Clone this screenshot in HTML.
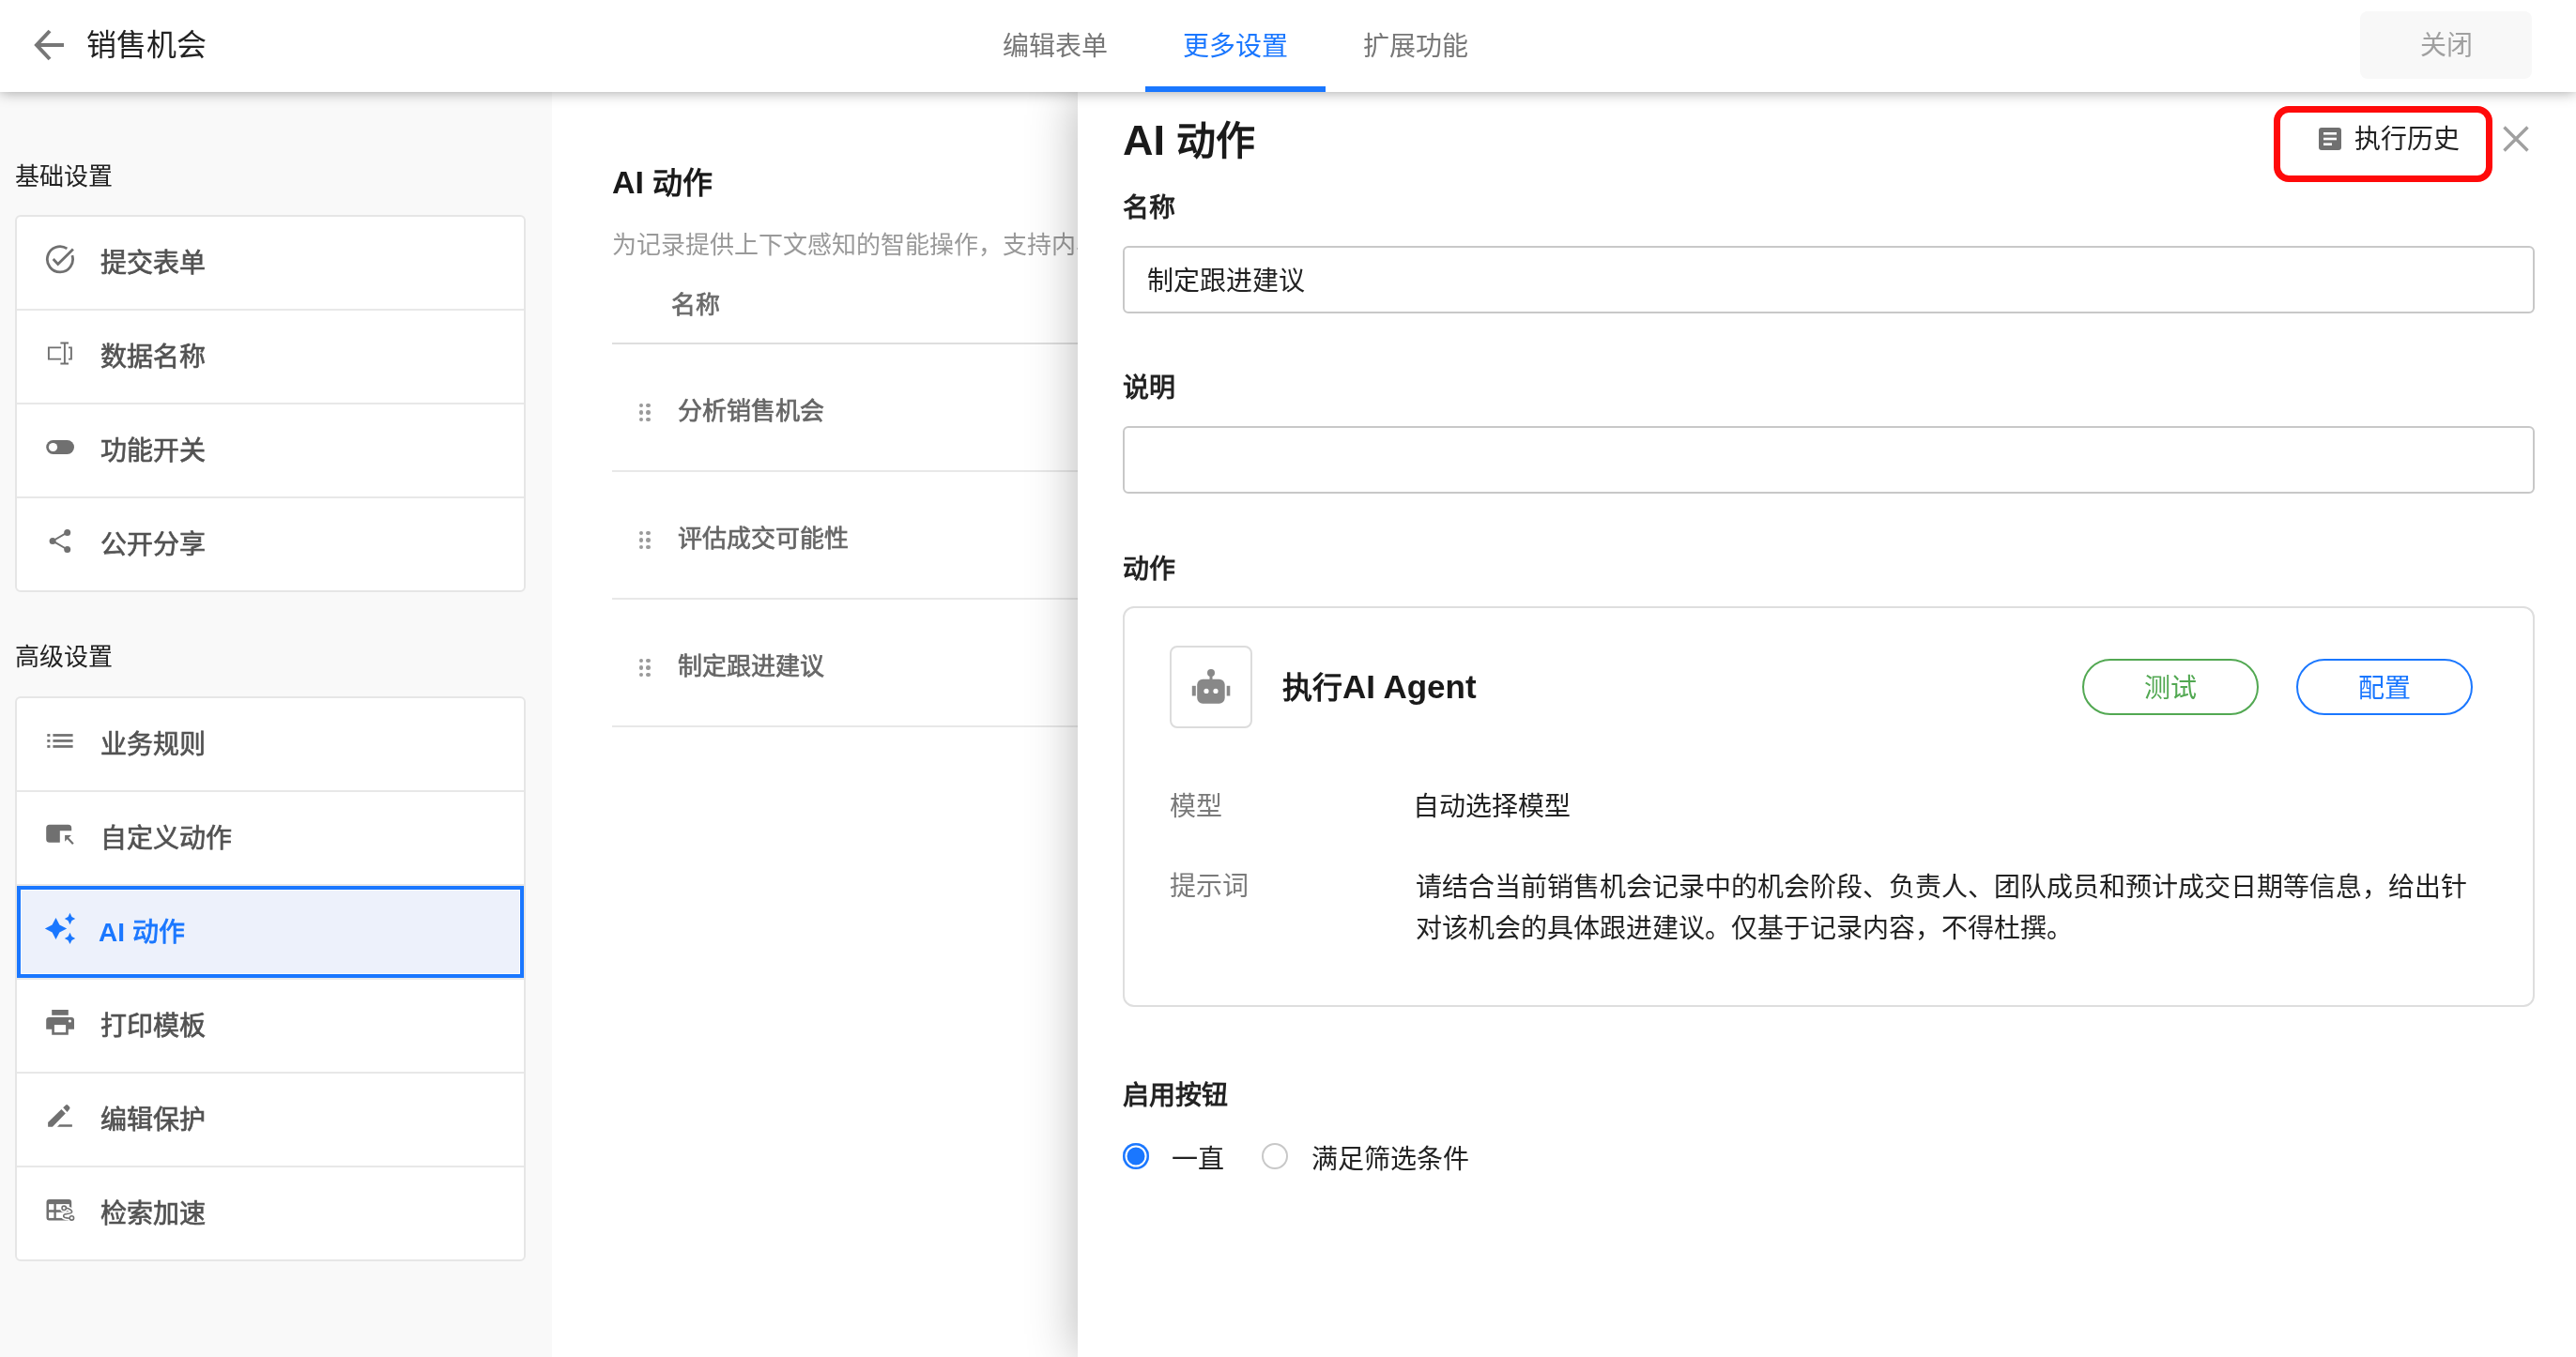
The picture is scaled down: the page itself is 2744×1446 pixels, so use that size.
<!DOCTYPE html>
<html lang="zh-CN">
<head>
<meta charset="utf-8">
<style>
*{box-sizing:border-box;margin:0;padding:0}
html,body{width:2744px;height:1446px;overflow:hidden;background:#fff;font-family:"Liberation Sans",sans-serif;}
body{will-change:transform}
.a{position:absolute;white-space:nowrap}
.t{position:absolute;white-space:nowrap;line-height:1}
#header{position:absolute;left:0;top:0;width:2744px;height:98px;background:#fff;z-index:10;box-shadow:0 0 14px rgba(0,0,0,0.38)}
#side{position:absolute;left:0;top:98px;width:588px;height:1348px;background:#f9f9f9}
.card{position:absolute;left:16px;width:544px;background:#fff;border:2px solid #e6e6e6;border-radius:6px}
.row{position:relative;height:100px;border-bottom:2px solid #e8e8e8}
.row:last-child{height:98px;border-bottom:none}
.row .lbl{position:absolute;left:89px;top:36px;font-size:28px;line-height:28px;color:#525252;-webkit-text-stroke:0.7px #525252}
.row svg{position:absolute;left:30px;top:30px}
#main{position:absolute;left:588px;top:98px;width:560px;height:1348px;background:#fff}
#drawer{position:absolute;left:1148px;top:98px;width:1596px;height:1348px;background:#fff;z-index:5;box-shadow:0 0 50px rgba(0,0,0,0.29)}
.lab{position:absolute;left:48px;font-size:28px;line-height:28px;color:#222;font-weight:700}
.inp{position:absolute;left:48px;width:1504px;height:72px;border:2px solid #c8c8c8;border-radius:6px;background:#fff}
</style>
</head>
<body>
<div id="header">
  <svg class="a" style="left:34px;top:29px" width="38" height="38" viewBox="0 0 38 38"><path d="M19 4 L5 19 L19 34 M5 19 H34" fill="none" stroke="#777" stroke-width="4"/></svg>
  <div class="t" style="left:92px;top:32px;font-size:32px;color:#222">销售机会</div>
  <div class="t" style="left:1068px;top:36px;font-size:28px;color:#777">编辑表单</div>
  <div class="t" style="left:1260px;top:36px;font-size:28px;color:#1a77ff">更多设置</div>
  <div class="t" style="left:1452px;top:36px;font-size:28px;color:#777">扩展功能</div>
  <div class="a" style="left:1220px;top:92px;width:192px;height:6px;background:#1a77ff"></div>
  <div class="a" style="left:2514px;top:12px;width:183px;height:72px;background:#f8f8f8;border-radius:8px"></div>
  <div class="t" style="left:2578px;top:35px;font-size:28px;color:#a0a0a0">关闭</div>
</div>

<div id="side">
  <div class="t" style="left:16px;top:77px;font-size:26px;color:#222">基础设置</div>
  <div class="card" style="top:131px">
    <div class="row"><svg width="32" height="32" viewBox="0 0 32 32"><path d="M28.9 11.1 A13.6 13.6 0 1 1 23.4 3.9" fill="none" stroke="#707070" stroke-width="2.8"/><path d="M8.7 15 L13.7 20.4 L29.9 4.4" fill="none" stroke="#707070" stroke-width="2.8"/></svg><div class="lbl">提交表单</div></div>
    <div class="row"><svg width="32" height="32" viewBox="0 0 32 32"><path d="M17.1 9.4 H3.9 V21.6 H17.1 M25 9.4 H27.9 V21.6 H25 M20.9 4.5 V26.5 M16.4 4.5 H25 M16.4 26.5 H25" fill="none" stroke="#707070" stroke-width="1.9"/></svg><div class="lbl">数据名称</div></div>
    <div class="row"><svg width="32" height="32" viewBox="0 0 32 32"><rect x="1.2" y="8.1" width="29.8" height="14.8" rx="7.4" fill="#707070"/><circle cx="8.5" cy="15.5" r="4.6" fill="#fff"/></svg><div class="lbl">功能开关</div></div>
    <div class="row"><svg width="32" height="32" viewBox="0 0 32 32"><path d="M23.7 6.4 L8.1 15.4 L23.7 24.5" fill="none" stroke="#707070" stroke-width="1.9"/><circle cx="23.7" cy="6.4" r="3.5" fill="#707070"/><circle cx="8.1" cy="15.4" r="3.5" fill="#707070"/><circle cx="23.7" cy="24.5" r="3.5" fill="#707070"/></svg><div class="lbl">公开分享</div></div>
  </div>
  <div class="t" style="left:16px;top:589px;font-size:26px;color:#222">高级设置</div>
  <div class="card" style="top:644px">
    <div class="row"><svg width="32" height="32" viewBox="0 0 32 32"><g fill="#707070"><rect x="2.3" y="8.1" width="3.1" height="2.7"/><rect x="2.3" y="14.1" width="3.1" height="2.7"/><rect x="2.3" y="20.1" width="3.1" height="2.7"/><rect x="8.4" y="8.1" width="21.2" height="2.7"/><rect x="8.4" y="14.1" width="21.2" height="2.7"/><rect x="8.4" y="20.1" width="21.2" height="2.7"/></g></svg><div class="lbl">业务规则</div></div>
    <div class="row"><svg width="32" height="32" viewBox="0 0 32 32"><path d="M4.7 4.7 H24.7 A3.5 3.5 0 0 1 28.2 8.2 V11.3 H15.8 V23.7 H4.7 A3.5 3.5 0 0 1 1.2 20.2 V8.2 A3.5 3.5 0 0 1 4.7 4.7 Z" fill="#707070"/><path d="M21.1 16.1 H27.9 L21.1 22.8 Z" fill="#707070"/><path d="M23.5 18.5 L29.9 25.3" stroke="#707070" stroke-width="2.2"/></svg><div class="lbl">自定义动作</div></div>
    <div class="row" style="background:#edf1fb"><div style="position:absolute;left:0;top:0;width:540px;height:98px;border:4px solid #1a77ff;box-shadow:inset 0 0 0 1px #fff"></div><svg width="32" height="32" viewBox="0 0 32 32" style="overflow:visible"><g fill="#1a77ff"><path d="M11.5 3.9 L15.4 11.6 L23.15 15.5 L15.4 19.4 L11.5 27.1 L7.6 19.4 L-0.15 15.5 L7.6 11.6 Z"/><path d="M26.5 -1.2 L28.5 3 L32.2 5 L28.5 7 L26.5 11.2 L24.5 7 L20.8 5 L24.5 3 Z"/><path d="M26.5 19.7 L28.5 23.9 L32.2 25.9 L28.5 27.9 L26.5 32.1 L24.5 27.9 L20.8 25.9 L24.5 23.9 Z"/></g></svg><div class="lbl" style="margin-left:-2px;color:#1a77ff;-webkit-text-stroke:0.8px #1a77ff"><span style="font-weight:700;-webkit-text-stroke:0 transparent">AI</span> 动作</div></div>
    <div class="row"><svg width="32" height="32" viewBox="0 0 32 32"><g fill="#707070"><rect x="7.2" y="2" width="17.6" height="5.8"/><path d="M4.2 9.9 H28 A3 3 0 0 1 31 12.9 V22.7 H24.8 V28.7 H7.2 V22.7 H1.2 V12.9 A3 3 0 0 1 4.2 9.9 Z"/></g><rect x="9.9" y="18.1" width="12.2" height="8" fill="#fff"/><circle cx="26.4" cy="14" r="1.6" fill="#fff"/></svg><div class="lbl">打印模板</div></div>
    <div class="row"><svg width="32" height="32" viewBox="0 0 32 32"><g fill="#707070"><path d="M3.1 26.8 V22.1 L17.4 7.9 L21.8 12.5 L7.9 26.8 Z"/><path d="M19.2 6.3 L22.1 3.4 Q23.2 2.6 24.2 3.6 L26.1 5.6 Q27 6.7 26.1 7.8 L23.6 10.9 Z"/><path d="M13 26.8 L15.4 24.3 H28.9 V26.8 Z"/></g></svg><div class="lbl">编辑保护</div></div>
    <div class="row"><svg width="32" height="32" viewBox="0 0 32 32"><path d="M4.5 4 H25.2 A3 3 0 0 1 28.2 7 V26.4 H4.5 A3 3 0 0 1 1.5 23.4 V7 A3 3 0 0 1 4.5 4 Z" fill="#707070"/><g fill="#fff"><rect x="4" y="9.1" width="5.4" height="6.1"/><rect x="11.8" y="9.1" width="14" height="6.1"/><rect x="4" y="17.8" width="5.4" height="6.1"/><rect x="11.8" y="17.8" width="14" height="6.1"/></g><path d="M22.8 13.3 C26 14.2 29 15.5 28.6 17.6 C28.2 19.2 24 19.3 21.5 19.8 C19.5 20.3 19 22.5 20.8 23.3 C22.5 24 24.5 24.2 26 24.3" fill="none" stroke="#fff" stroke-width="4.6"/><circle cx="20.2" cy="13.3" r="4.4" fill="#fff"/><circle cx="28.4" cy="23.9" r="4.4" fill="#fff"/><path d="M22.8 13.3 C26 14.2 29 15.5 28.6 17.6 C28.2 19.2 24 19.3 21.5 19.8 C19.5 20.3 19 22.5 20.8 23.3 C22.5 24 24.5 24.2 26 24.3" fill="none" stroke="#707070" stroke-width="1.6"/><circle cx="20.2" cy="13.3" r="2.2" fill="#fff" stroke="#707070" stroke-width="1.6"/><circle cx="28.4" cy="23.9" r="2.2" fill="#fff" stroke="#707070" stroke-width="1.6"/></svg><div class="lbl">检索加速</div></div>
  </div>
</div>

<div id="main">
  <div class="t" style="left:64px;top:79px;font-size:32px;color:#1a1a1a;font-weight:700"><span style="font-size:34px">AI</span> 动作</div>
  <div class="t" style="left:64px;top:149.5px;font-size:26px;color:#999">为记录提供上下文感知的智能操作，支持内容生成与分析</div>
  <div class="t" style="left:127px;top:213.5px;font-size:26px;color:#6a6a6a;-webkit-text-stroke:0.7px #6a6a6a">名称</div>
  <div class="a" style="left:64px;top:267px;width:600px;height:2px;background:#dedede"></div>
  <div class="a" style="left:64px;top:403px;width:600px;height:2px;background:#e8e8e8"></div>
  <div class="a" style="left:64px;top:539px;width:600px;height:2px;background:#e8e8e8"></div>
  <div class="a" style="left:64px;top:675px;width:600px;height:2px;background:#e8e8e8"></div>
  <div class="a" style="left:92.7px;top:331.7px;width:4.6px;height:4.6px;border-radius:50%;background:#9a9a9a"></div><div class="a" style="left:100.4px;top:331.7px;width:4.6px;height:4.6px;border-radius:50%;background:#9a9a9a"></div><div class="a" style="left:92.7px;top:339.2px;width:4.6px;height:4.6px;border-radius:50%;background:#9a9a9a"></div><div class="a" style="left:100.4px;top:339.2px;width:4.6px;height:4.6px;border-radius:50%;background:#9a9a9a"></div><div class="a" style="left:92.7px;top:346.9px;width:4.6px;height:4.6px;border-radius:50%;background:#9a9a9a"></div><div class="a" style="left:100.4px;top:346.9px;width:4.6px;height:4.6px;border-radius:50%;background:#9a9a9a"></div><div class="a" style="left:92.7px;top:467.7px;width:4.6px;height:4.6px;border-radius:50%;background:#9a9a9a"></div><div class="a" style="left:100.4px;top:467.7px;width:4.6px;height:4.6px;border-radius:50%;background:#9a9a9a"></div><div class="a" style="left:92.7px;top:475.2px;width:4.6px;height:4.6px;border-radius:50%;background:#9a9a9a"></div><div class="a" style="left:100.4px;top:475.2px;width:4.6px;height:4.6px;border-radius:50%;background:#9a9a9a"></div><div class="a" style="left:92.7px;top:482.9px;width:4.6px;height:4.6px;border-radius:50%;background:#9a9a9a"></div><div class="a" style="left:100.4px;top:482.9px;width:4.6px;height:4.6px;border-radius:50%;background:#9a9a9a"></div><div class="a" style="left:92.7px;top:603.7px;width:4.6px;height:4.6px;border-radius:50%;background:#9a9a9a"></div><div class="a" style="left:100.4px;top:603.7px;width:4.6px;height:4.6px;border-radius:50%;background:#9a9a9a"></div><div class="a" style="left:92.7px;top:611.2px;width:4.6px;height:4.6px;border-radius:50%;background:#9a9a9a"></div><div class="a" style="left:100.4px;top:611.2px;width:4.6px;height:4.6px;border-radius:50%;background:#9a9a9a"></div><div class="a" style="left:92.7px;top:618.9px;width:4.6px;height:4.6px;border-radius:50%;background:#9a9a9a"></div><div class="a" style="left:100.4px;top:618.9px;width:4.6px;height:4.6px;border-radius:50%;background:#9a9a9a"></div>
  <div class="t" style="left:134px;top:327px;font-size:26px;color:#666;-webkit-text-stroke:0.7px #666">分析销售机会</div>
  <div class="t" style="left:134px;top:463px;font-size:26px;color:#666;-webkit-text-stroke:0.7px #666">评估成交可能性</div>
  <div class="t" style="left:134px;top:599px;font-size:26px;color:#666;-webkit-text-stroke:0.7px #666">制定跟进建议</div>
</div>

<div id="drawer">
  <div class="t" style="left:48px;top:28.5px;font-size:42px;color:#1a1a1a;font-weight:700"><span style="font-size:45px">AI</span> 动作</div>
  <div class="lab" style="top:110px">名称</div>
  <div class="inp" style="top:164px"></div>
  <div class="t" style="left:74px;top:188px;font-size:28px;color:#222">制定跟进建议</div>
  <div class="lab" style="top:302px">说明</div>
  <div class="inp" style="top:356px"></div>
  <div class="lab" style="top:494.5px">动作</div>
  <div class="a" style="left:1274px;top:15px;width:233px;height:81px;border:7px solid #ff0a0a;border-radius:16px"></div>
  <svg class="a" style="left:1322px;top:38px" width="24" height="24" viewBox="0 0 24 24"><rect x="0" y="0" width="24" height="24" rx="3" fill="#707070"/><rect x="5" y="5" width="14" height="2.6" fill="#fff"/><rect x="5" y="10.7" width="14" height="2.6" fill="#fff"/><rect x="5" y="16.4" width="9" height="2.6" fill="#fff"/></svg>
  <div class="t" style="left:1360px;top:37px;font-size:28px;color:#222">执行历史</div>
  <svg class="a" style="left:1518px;top:36px" width="28" height="28" viewBox="0 0 28 28"><path d="M1.5 1.5 L26.5 26.5 M26.5 1.5 L1.5 26.5" stroke="#a0a0a0" stroke-width="3.4" fill="none"/></svg>

  <div class="a" style="left:48px;top:548px;width:1504px;height:427px;border:2px solid #dedede;border-radius:12px"></div>
  <div class="a" style="left:98px;top:590px;width:88px;height:88px;border:2px solid #dcdcdc;border-radius:8px"></div>
  <svg class="a" style="left:120px;top:612px" width="44" height="44" viewBox="0 0 44 44"><circle cx="22" cy="7" r="4" fill="#888"/><rect x="20.5" y="8" width="3" height="6" fill="#888"/><rect x="7.2" y="13.8" width="29.5" height="26" rx="6" fill="#888"/><circle cx="17" cy="26.4" r="2.6" fill="#fff"/><circle cx="27" cy="26.4" r="2.6" fill="#fff"/><rect x="1.8" y="20.8" width="4" height="10.7" fill="#888"/><rect x="38.7" y="20.8" width="3.6" height="10.7" fill="#888"/></svg>
  <div class="t" style="left:218px;top:616px;font-size:32px;color:#1a1a1a;font-weight:700">执行<span style="font-size:35px">AI Agent</span></div>
  <div class="a" style="left:1070px;top:604px;width:188px;height:60px;border:2px solid #52a852;border-radius:30px"></div>
  <div class="t" style="left:1136px;top:622px;font-size:28px;color:#52a852">测试</div>
  <div class="a" style="left:1298px;top:604px;width:188px;height:60px;border:2px solid #1a77ff;border-radius:30px"></div>
  <div class="t" style="left:1364px;top:622px;font-size:28px;color:#1a77ff">配置</div>
  <div class="t" style="left:98px;top:748px;font-size:28px;color:#7a7a7a">模型</div>
  <div class="t" style="left:357px;top:748px;font-size:28px;color:#222">自动选择模型</div>
  <div class="t" style="left:98px;top:832.5px;font-size:28px;color:#7a7a7a">提示词</div>
  <div class="a" style="left:360px;top:826px;font-size:28px;line-height:44.2px;color:#222;white-space:normal;width:1120px">请结合当前销售机会记录中的机会阶段、负责人、团队成员和预计成交日期等信息，给出针对该机会的具体跟进建议。仅基于记录内容，不得杜撰。</div>

  <div class="lab" style="top:1056px">启用按钮</div>
  <div class="a" style="left:48px;top:1120px;width:28px;height:28px;border-radius:50%;background:#1a77ff;box-shadow:inset 0 0 0 2.5px #1a77ff, inset 0 0 0 4.5px #fff"></div>
  <div class="t" style="left:100px;top:1124px;font-size:28px;color:#222">一直</div>
  <div class="a" style="left:196px;top:1120px;width:28px;height:28px;border-radius:50%;border:2px solid #c8c8c8"></div>
  <div class="t" style="left:249px;top:1124px;font-size:28px;color:#222">满足筛选条件</div>
</div>
</body>
</html>
